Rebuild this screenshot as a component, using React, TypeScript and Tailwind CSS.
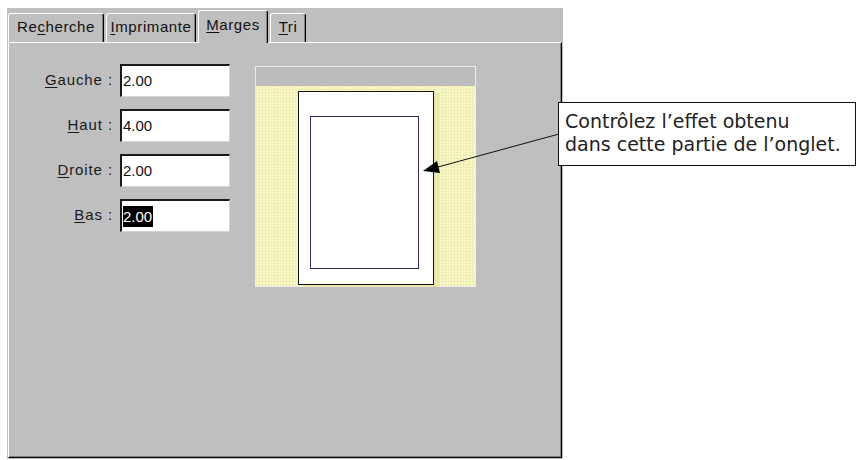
import React from "react";

const ui = { fontFamily: '"Liberation Sans", Arial, sans-serif' };

function Tab({ label, u, w, selected, ml }: { label: string; u: number; w: string; selected?: boolean; ml: string }) {
  const before = label.slice(0, u);
  const ch = label.slice(u, u + 1);
  const after = label.slice(u + 1);
  return (
    <div
      className={`${w} ${ml} flex items-center justify-center bg-[#bfbfbf] border-l border-t border-r border-l-white border-t-white border-r-black rounded-tl-[3px] rounded-tr-[3px] shadow-[inset_-1px_0_0_#808080] text-[15px] tracking-[0.6px] text-[#111] ${
        selected ? "h-[33px] -mb-[1px] pb-[3px]" : "h-[29px] pb-[1px]"
      }`}
    >
      <span>
        {before}
        <span className="underline underline-offset-2">{ch}</span>
        {after}
      </span>
    </div>
  );
}

function Field({ label, value, selected }: { label: React.ReactNode; value: string; selected?: boolean }) {
  return (
    <div className="flex items-center h-[33px] gap-[7px]">
      <div className="w-[104px] text-right text-[15px] tracking-[0.9px] text-[#1a1a1a]">{label}</div>
      <div className="w-[110px] h-[33px] bg-white border-t-2 border-l-2 border-r border-b border-t-[#1a1a1a] border-l-[#1a1a1a] border-r-[#d4d4d4] border-b-[#d4d4d4] flex items-center pl-[1px] text-[15px] text-[#111]">
        {selected ? (
          <span className="bg-black text-white leading-[21px] pr-[1px]">{value}</span>
        ) : (
          <span>{value}</span>
        )}
      </div>
    </div>
  );
}

function U({ c }: { c: string }) {
  return <span className="underline underline-offset-2">{c}</span>;
}

export default function App() {
  return (
    <div className="relative w-[865px] h-[460px] bg-white overflow-hidden" style={ui}>
      <div className="ml-[7px] mt-[8px] w-[556px] h-[451px] bg-[#bfbfbf] flex flex-col">
        <div className="relative z-10 h-[34px] flex items-end pl-[1px]">
          <Tab label="Recherche" u={2} w="w-[96px]" ml="ml-0" />
          <Tab label="Imprimante" u={0} w="w-[90px]" ml="ml-[2px]" />
          <Tab label="Marges" u={0} w="w-[70px]" ml="ml-[2px]" selected />
          <Tab label="Tri" u={0} w="w-[36px]" ml="ml-[2px]" />
        </div>
        <div className="flex-1 ml-[1px] mr-[1px] mb-[1px] border-l border-t border-r border-b border-l-white border-t-white border-r-black border-b-black shadow-[inset_-1px_-1px_0_#808080] flex items-start pt-[21px]">
          <div className="flex flex-col gap-[12px]">
            <Field label={<><U c="G" />auche :</>} value="2.00" />
            <Field label={<><U c="H" />aut :</>} value="4.00" />
            <Field label={<><U c="D" />roite :</>} value="2.00" />
            <Field label={<><U c="B" />as :</>} value="2.00" selected />
          </div>
          <div className="ml-[25px] mt-[2px] w-[221px] h-[221px] border border-[#ececec] flex flex-col">
            <div className="h-[19px] bg-[#bcbcbc]" />
            <div className="flex-1 flex justify-center pt-[5px] bg-[#fafac6] bg-[linear-gradient(#ededb5_1px,transparent_1px),linear-gradient(90deg,#ededb5_1px,transparent_1px)] bg-[size:3px_3px]">
              <div className="w-[136px] h-[194px] bg-white border border-[#111] shadow-[5px_2px_0_#eaeab0] flex pl-[11px] pt-[24px] pr-[14px] pb-[15px]">
                <div className="flex-1 border border-[#2f2f66]" />
              </div>
            </div>
          </div>
        </div>
      </div>

      <svg className="absolute inset-0 pointer-events-none" width="865" height="460" viewBox="0 0 865 460">
        <line x1="438" y1="167" x2="559" y2="134" stroke="#111" strokeWidth="1" />
        <polygon points="423,171 437,161 440,173" fill="#000" />
      </svg>

      <div
        className="absolute left-[558px] top-[102px] w-[298px] h-[64px] bg-white border border-[#111] pl-[6px] pt-[7px] text-[19px] leading-[23px] text-[#222]"
        style={{ fontFamily: '"DejaVu Sans", sans-serif' }}
      >
        <div>Contrôlez l’effet obtenu</div>
        <div>dans cette partie de l’onglet.</div>
      </div>
    </div>
  );
}
